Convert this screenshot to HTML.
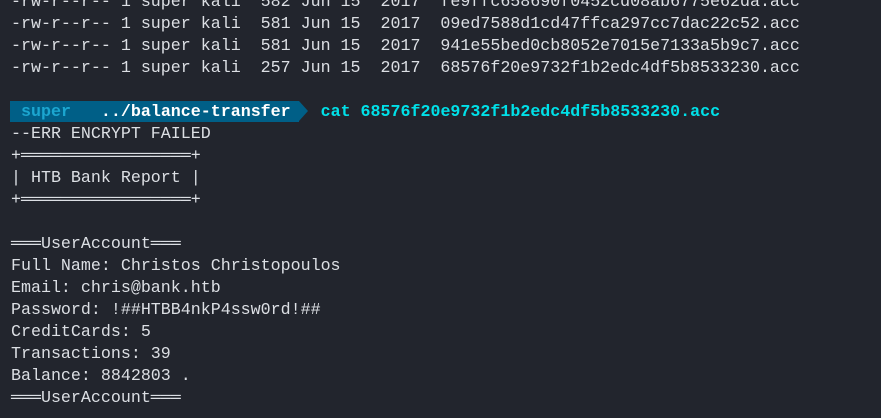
<!DOCTYPE html>
<html><head><style>
html,body{margin:0;padding:0;background:#22252d;width:881px;height:418px;overflow:hidden}
pre{margin:0;position:absolute;left:11px;top:-9px;font-family:"Liberation Mono","DejaVu Sans Mono",monospace;font-size:16.65px;line-height:22px;color:#dcdfe4;white-space:pre}
.bar{position:absolute;left:10px;top:101px;width:289px;height:21px;background:#005f87}
.tri{position:absolute;left:299px;top:101px;width:0;height:0;border-top:10.5px solid transparent;border-bottom:10.5px solid transparent;border-left:9px solid #005f87}
.u{color:#1ba6d0;font-weight:bold}
.w{color:#fff;font-weight:bold}
.c{color:#00e0e8;font-weight:bold}
</style></head><body>
<div class="bar"></div><div class="tri"></div>
<pre>-rw-r--r-- 1 super kali  582 Jun 15  2017  fe9ffc658690f0452cd08ab6775e62da.acc
-rw-r--r-- 1 super kali  581 Jun 15  2017  09ed7588d1cd47ffca297cc7dac22c52.acc
-rw-r--r-- 1 super kali  581 Jun 15  2017  941e55bed0cb8052e7015e7133a5b9c7.acc
-rw-r--r-- 1 super kali  257 Jun 15  2017  68576f20e9732f1b2edc4df5b8533230.acc

 <span class="u">super</span>   <span class="w">../balance-transfer</span>   <span class="c">cat 68576f20e9732f1b2edc4df5b8533230.acc</span>
--ERR ENCRYPT FAILED
+═════════════════+
| HTB Bank Report |
+═════════════════+

═══UserAccount═══
Full Name: Christos Christopoulos
Email: chris@bank.htb
Password: !##HTBB4nkP4ssw0rd!##
CreditCards: 5
Transactions: 39
Balance: 8842803 .
═══UserAccount═══</pre>
</body></html>
